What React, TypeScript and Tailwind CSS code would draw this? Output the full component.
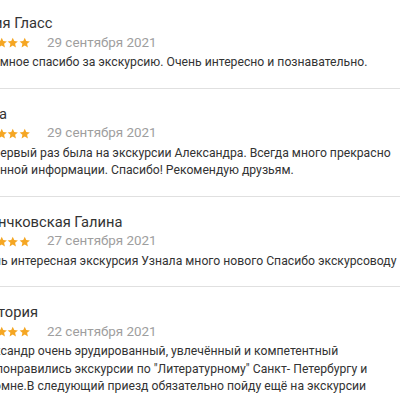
const reviews = [
  {
    name: "Юлия Гласс",
    date: "29 сентября 2021",
    text: "Огромное спасибо за экскурсию. Очень интересно и познавательно.",
  },
  {
    name: "Анна",
    date: "29 сентября 2021",
    text: "Я в первый раз была на экскурсии Александра. Всегда много прекрасно поданной информации. Спасибо! Рекомендую друзьям.",
  },
  {
    name: "Бранчковская Галина",
    date: "27 сентября 2021",
    text: "Очень интересная экскурсия Узнала много нового Спасибо экскурсоводу",
  },
  {
    name: "Виктория",
    date: "22 сентября 2021",
    text: "Александр очень эрудированный, увлечённый и компетентный\nВсе понравились экскурсии по \"Литературному\" Санкт- Петербургу и Коломне.В следующий приезд обязательно пойду ещё на экскурсии Александра.",
  },
]

function Star() {
  return (
    <svg width="11.5" height="11.5" viewBox="0 0 24 24" className="fill-[#f5a623]">
      <path d="M12 1.5l3.1 7 7.6.7-5.8 5 1.7 7.5L12 17.8l-6.6 3.9 1.7-7.5-5.8-5 7.6-.7z" />
    </svg>
  )
}

export default function App() {
  return (
    <div className="w-[400px] h-[400px] overflow-hidden bg-white font-['Roboto',sans-serif]">
      <div className="w-[440px] -ml-[27.5px] flex flex-col">
        {reviews.map((r, i) => (
          <div
            key={i}
            className={
              i === 0
                ? "pt-[13px] pb-4"
                : "border-t border-[#e0e0e0] pt-[15px] pb-4"
            }
          >
            <div className="text-[14.7px] leading-5 text-[#333333]">{r.name}</div>
            <div className="flex items-center h-5">
              <div className="flex w-[74.5px]">
                <Star />
                <Star />
                <Star />
                <Star />
                <Star />
              </div>
              <span className="text-[13.4px] text-[#9e9e9e]">{r.date}</span>
            </div>
            <p className="mt-px text-[12.2px] leading-[17.5px] text-[#333333] whitespace-pre-line">
              {r.text}
            </p>
          </div>
        ))}
      </div>
    </div>
  )
}
